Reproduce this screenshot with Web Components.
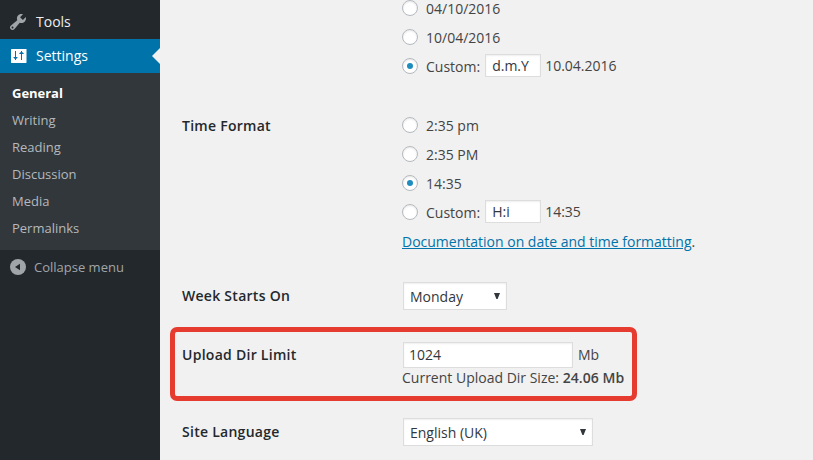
<!DOCTYPE html>
<html lang="en">
<head>
<meta charset="utf-8">
<title>General Settings</title>
<style>
html,body{margin:0;height:460px;overflow:hidden}
body{background:#f1f1f1;font-family:"Open Sans",sans-serif;font-size:14px;line-height:20px;color:#444}
</style>
</head>
<body>
<settings-page></settings-page>
<script>
function define(name, markup) {
  const template = document.createElement('template');
  template.innerHTML = markup;
  customElements.define(name, class extends HTMLElement {
    constructor() {
      super();
      this.attachShadow({mode: 'open'}).append(template.content.cloneNode(true));
    }
  });
}

define('menu-item', `
<style>
:host{display:flex;align-items:center;height:34px;color:#eee;position:relative}
.icon{display:flex;width:36px;padding-left:8px;box-sizing:border-box}
:host([current]){background:#0073aa;color:#fff}
:host([current])::after{content:"";position:absolute;right:0;top:9px;border:8px solid transparent;border-left:0;border-right-color:#f1f1f1}
</style>
<span class="icon"><slot name="icon"></slot></span><slot></slot>`);

define('sub-item', `
<style>
:host{display:block;height:27px;line-height:27px;padding-left:12px;font-size:13px;color:#b4b9be}
:host([current]){color:#fff;font-weight:700;letter-spacing:-.03px}
</style><slot></slot>`);

define('side-menu', `
<style>
:host{display:block;width:160px;height:460px;background:#23282d}
.first{height:39px;display:flex;align-items:flex-end}
.first menu-item{flex:1}
.sub{background:#32373c;height:177px;padding-top:7px;box-sizing:border-box}
.collapse{display:flex;align-items:center;height:34px;color:#a0a5aa;font-size:13px;gap:6px;padding-left:8px}
svg{display:block;width:20px;height:20px}
</style>
<div class="first"><menu-item><svg slot="icon" viewBox="0 0 20 20" fill="#a0a5aa"><path d="M16.68 9.77c-1.34 1.34-3.3 1.67-4.95.99l-5.41 6.52c-.99.99-2.59.99-3.58 0s-.99-2.59 0-3.57l6.52-5.42c-.68-1.65-.35-3.61.99-4.95 1.28-1.28 3.12-1.62 4.72-1.06l-2.89 2.89 2.82 2.82 2.86-2.87c.53 1.58.18 3.39-1.08 4.65zM3.81 16.21c.4.39 1.04.39 1.43 0 .4-.4.4-1.04 0-1.43-.39-.4-1.03-.4-1.43 0-.39.39-.39 1.03 0 1.43z"/></svg>Tools</menu-item></div>
<menu-item current><svg slot="icon" viewBox="0 0 20 20"><rect x="3" y="3" width="15.5" height="14" rx=".4" fill="#fff"/><path fill="#0073aa" d="M7 5h1v6h1.5v.8L8 13v1H7v-1l-1.5-1.2V11H7zM13 5h1v1l1.7 1.2V8H14v6h-1V8h-1.7v-.8L13 6z"/></svg>Settings</menu-item>
<div class="sub">
<sub-item current>General</sub-item><sub-item>Writing</sub-item><sub-item>Reading</sub-item><sub-item>Discussion</sub-item><sub-item>Media</sub-item><sub-item>Permalinks</sub-item>
</div>
<div class="collapse"><svg viewBox="0 0 20 20"><circle cx="10" cy="10" r="8" fill="#a0a5aa"/><path d="M12 6.7v6.6L7 10z" fill="#23282d"/></svg><span>Collapse menu</span></div>`);

define('text-field', `
<style>
:host{display:block;box-sizing:border-box;border:1px solid #ddd;background:#fff;box-shadow:inset 0 1px 2px rgba(0,0,0,.07);color:#32373c;padding:2px 5px;white-space:nowrap}
</style><slot></slot>`);

define('select-field', `
<style>
:host{display:flex;justify-content:space-between;box-sizing:border-box;height:28px;margin-left:1px;border:1px solid #ddd;background:#fff;box-shadow:inset 0 1px 2px rgba(0,0,0,.07);color:#32373c;padding:4px 6px 0 6px;line-height:20px}
svg{width:6px;height:6px;margin-top:6px}
</style><span><slot></slot></span><svg viewBox="0 0 6 6"><path d="M0 0h6L3.6 6H2.4z" fill="#32373c"/></svg>`);

define('radio-option', `
<style>
:host{display:flex;align-items:flex-start;height:29px;box-sizing:border-box;padding-top:6px}
.dot{box-sizing:border-box;width:16px;height:16px;border:1px solid #b4b9be;border-radius:50%;background:#fff;box-shadow:inset 0 1px 2px rgba(0,0,0,.1);margin-right:8px;flex:none;display:grid;place-items:center}
:host([checked]) .dot::after{content:"";width:6px;height:6px;border-radius:50%;background:#1e8cbe}
.label{margin-top:-1px}
::slotted(text-field){width:56px;height:23px;margin:-4px 4px 0 5px;padding:1px 6px!important}
::slotted(.sample){margin-top:-2px}
</style><span class="dot"></span><span class="label"><slot></slot></span><slot name="extra"></slot>`);

define('form-row', `
<style>
:host{display:grid;grid-template-columns:220px 1fr;padding-left:22px;box-sizing:border-box}
.label{font-weight:600;letter-spacing:.27px;color:#23282d;padding-top:var(--label-top,0)}
.field{padding-top:var(--field-top,0)}
:host([highlight]){border:5px solid #e63c2f;border-radius:7px;width:467px;margin-left:10px;padding-left:7px}
</style><div class="label"><slot name="label"></slot></div><div class="field"><slot></slot></div>`);

define('settings-page', `
<style>
:host{display:grid;grid-template-columns:160px 1fr;height:460px;overflow:hidden}
main{display:grid;grid-template-rows:81px 190px 56px 74px 59px;min-width:0}
.date{--field-top:0}
.dates{margin-top:-6px}
.time{--label-top:35px;--field-top:30px}
.week{--label-top:15px;--field-top:11px}
.upload{--label-top:13px;--field-top:10px}
.lang{--label-top:21px;--field-top:17px}
.size{display:flex;gap:5px}
.size text-field{width:170px;height:26px;margin-left:1px}
.size span{padding-top:3px}
a{color:#0073aa;text-decoration:underline}
.doc{margin-top:5px}
</style>
<side-menu></side-menu>
<main>
<form-row class="date"><div class="dates">
<radio-option>04/10/2016</radio-option><radio-option>10/04/2016</radio-option>
<radio-option checked>Custom:<text-field slot="extra">d.m.Y</text-field><span slot="extra" class="sample">10.04.2016</span></radio-option></div></form-row>
<form-row class="time"><span slot="label">Time Format</span>
<radio-option>2:35 pm</radio-option><radio-option>2:35 PM</radio-option><radio-option checked>14:35</radio-option>
<radio-option>Custom:<text-field slot="extra">H:i</text-field><span slot="extra" class="sample">14:35</span></radio-option>
<div class="doc"><a href="#">Documentation on date and time formatting</a>.</div></form-row>
<form-row class="week"><span slot="label">Week Starts On</span><select-field style="width:104px">Monday</select-field></form-row>
<form-row class="upload" highlight><span slot="label">Upload Dir Limit</span><div class="size"><text-field>1024</text-field><span>Mb</span></div><div>Current Upload Dir Size: <b style="font-weight:600;letter-spacing:.08px">24.06 Mb</b></div></form-row>
<form-row class="lang"><span slot="label">Site Language</span><select-field style="width:190px">English (UK)</select-field></form-row>
</main>`);
</script>
</body>
</html>
